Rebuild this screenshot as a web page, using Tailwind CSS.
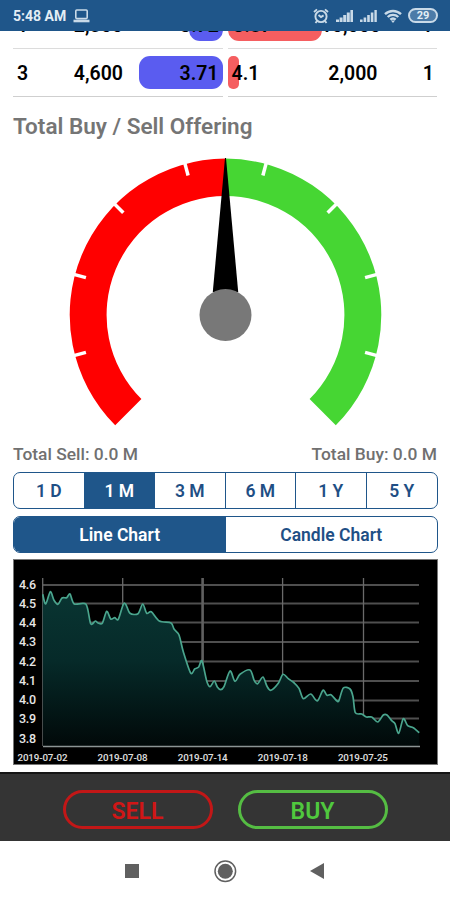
<!DOCTYPE html>
<html lang="en">
<head>
    <meta charset="UTF-8">
    <meta name="viewport" content="width=device-width, initial-scale=1.0">
    <title>Stock Detail</title>
    <script src="https://cdn.jsdelivr.net/npm/@tailwindcss/browser@4"></script>
</head>
<body class="bg-white">
    <div class="w-[450px] h-[900px] flex flex-col overflow-hidden bg-white font-['Roboto',sans-serif]">

        <!-- status bar -->
        <div class="h-[31px] shrink-0 bg-[#1f568a] text-[#e3edf5] flex items-center pl-[13px] pr-3">
            <span class="text-[14px] font-bold leading-none pt-[1px] w-[54px] whitespace-nowrap">5:48 AM</span>
            <svg class="ml-[6px] mt-[1px]" width="17" height="14" viewBox="0 0 17 14" fill="none" stroke="#c9dae8" stroke-width="1.6">
                <rect x="2.8" y="1" width="11.4" height="8.6" rx="1"/>
                <path d="M0.5 12h16" stroke-width="2.600"/>
            </svg>
            <svg class="ml-auto" width="16" height="16" viewBox="0 0 16 16" fill="none" stroke="#c9dae8" stroke-width="1.9">
                <circle cx="8" cy="8.5" r="5.6"/>
                <path d="M1 4l3-2.600M15 4l-3-2.600M5.500 7l2.500 2 2.600-1.600M4 13l-1.500 2M12 13l1.500 2"/>
            </svg>
            <svg class="ml-[6px]" width="19" height="14" viewBox="0 0 19 14" fill="#c9dae8">
                <path d="M1 10.500h3V13H1zM4.600 8.500h3V13h-3zM8.200 6h3v7h-3zM11.800 3.500h3V13h-3zM15.400 1H18v12h-2.600z"/>
            </svg>
            <svg class="ml-[5px]" width="19" height="14" viewBox="0 0 19 14" fill="#c9dae8">
                <path d="M1 10.500h2.600V13H1zM4.600 8.500h2.600V13H4.600zM8.200 6h2.600v7H8.200zM11.800 3.500h2.600V13h-2.600zM15.400 1h2.400v12h-2.400z"/>
            </svg>
            <svg class="ml-[6px]" width="18" height="14" viewBox="0 0 18 14" fill="none" stroke="#c9dae8" stroke-width="2.400">
                <path d="M1 5.200a11.500 11.500 0 0 1 16 0M3.700 8a7.600 7.600 0 0 1 10.600 0M6.300 10.700a4 4 0 0 1 5.400 0"/>
                <path d="M9 14l-2-2.500h4z" fill="#c9dae8" stroke="none"/>
            </svg>
            <div class="ml-[6px] w-[30px] h-[15px] rounded-full border-2 border-[#c9dae8] bg-[#4c7ba8] flex items-center justify-center text-[11px] font-bold leading-none">29</div>
        </div>

        <!-- order book -->
        <div class="h-[66px] shrink-0 mx-[13px] flex flex-col justify-end overflow-hidden text-[19.5px] font-semibold text-black">
            <div class="h-12 shrink-0 flex gap-[5px]">
                <div class="w-[210px] flex items-center border-b border-[#dcdcdc]">
                    <span class="w-[42px] pl-1 pt-[3px]">1</span>
                    <span class="w-[68px] text-right pt-[3px]">2,500</span>
                    <div class="ml-auto w-[34px] h-[33px] rounded-[11px] bg-[#5a5cf0] flex items-center justify-end pr-1 pt-[3px]">3.72</div>
                </div>
                <div class="w-[209px] flex items-center border-b border-[#dcdcdc]">
                    <div class="w-[94px] h-[33px] rounded-[11px] bg-[#f55e60] flex items-center pl-[5px] pt-[3px]">3.87</div>
                    <span class="w-[59px] flex justify-end whitespace-nowrap pt-[3px]">10,000</span>
                    <span class="ml-auto pr-[4px] pt-[3px]">1</span>
                </div>
            </div>
            <div class="h-12 shrink-0 flex gap-[5px]">
                <div class="w-[210px] flex items-center border-b border-[#cfcfcf]">
                    <span class="w-[42px] pl-1 pt-[2px]">3</span>
                    <span class="w-[68px] text-right pt-[2px]">4,600</span>
                    <div class="ml-auto w-[84px] h-[33px] rounded-[11px] bg-[#5a5cf0] flex items-center justify-end pr-1 pt-[2px]">3.71</div>
                </div>
                <div class="w-[210px] flex items-center border-b border-[#cfcfcf]">
                    <div class="w-[11px] h-[33px] rounded-[5px] bg-[#f55e60] flex items-center pl-1 pt-[2px] whitespace-nowrap">4.1</div>
                    <span class="w-[139px] text-right pt-[2px]">2,000</span>
                    <span class="ml-auto pr-[3px] pt-[2px]">1</span>
                </div>
            </div>
        </div>

        <h2 class="h-[58px] shrink-0 pl-[13px] text-[22.5px] leading-[58px] font-semibold text-[#757575] whitespace-nowrap">Total Buy / Sell Offering</h2>

        <!-- gauge -->
        <div class="h-[285px] shrink-0 flex justify-center">
            <svg class="shrink-0" width="450" height="285" viewBox="0 0 450 285">
                <path d="M225.500 3.500A156.500 156.500 0 0 0 115.200 270.300L141.400 244.100A119 119 0 0 1 225.500 41z" fill="#ff0000"/>
                <path d="M225.500 3.500A156.500 156.500 0 0 1 335.800 270.300L309.600 244.100A119 119 0 0 0 225.500 41z" fill="#46d633"/>
                <g id="ticks" stroke="#ffffff" stroke-width="3.500"></g>
                <path d="M225 3h1L238.200 137H212.800z" fill="#000000"/>
                <circle cx="225.500" cy="160" r="26" fill="#787878"/>
            </svg>
        </div>

        <div class="h-[32px] shrink-0 px-[13px] pb-[3px] flex justify-between items-center text-[17.4px] font-medium text-[#707070]">
            <span>Total Sell: 0.0 M</span>
            <span>Total Buy: 0.0 M</span>
        </div>

        <!-- range tabs -->
        <div class="h-[37px] shrink-0 ml-[13px] mr-3 rounded-[7px] border border-[#1f568a] overflow-hidden grid grid-cols-6 divide-x divide-[#1f568a] text-[17.5px] font-semibold text-[#1f4f85] text-center leading-[37px]">
            <span>1 D</span>
            <span class="bg-[#1f568a] text-white">1 M</span>
            <span>3 M</span>
            <span>6 M</span>
            <span>1 Y</span>
            <span>5 Y</span>
        </div>

        <!-- chart type -->
        <div class="h-[37px] shrink-0 ml-[13px] mr-3 mt-[7px] rounded-[7px] border border-[#1f568a] overflow-hidden grid grid-cols-2 text-[17.5px] font-semibold text-[#1f4f85] text-center leading-[37px]">
            <span class="bg-[#1f568a] text-white">Line Chart</span>
            <span>Candle Chart</span>
        </div>

        <!-- price chart -->
        <div class="h-[206px] shrink-0 ml-[13px] mr-3 mt-[6px] bg-black">
            <svg width="425" height="206" viewBox="0 0 425 206">
                <defs>
                    <linearGradient id="area" x1="0" y1="32" x2="0" y2="187" gradientUnits="userSpaceOnUse">
                        <stop offset="0" stop-color="#093532"/>
                        <stop offset="0.45" stop-color="#062a29"/>
                        <stop offset="1" stop-color="#010909"/>
                    </linearGradient>
                </defs>
                <rect x="0.500" y="0.500" width="424" height="205" fill="none" stroke="#777777"/>
                <path d="M30 26H406M30 44.600H406M30 63.500H406M30 83H406M30 102.500H406M30 122H406M30 141.500H406M30 159.500H406" stroke="#4f4f4f" stroke-width="2" fill="none"/>
                <path d="M29.700 19V187M109.700 19V187M269.600 19V187M350.500 19V187" stroke="#6a6a6a" stroke-width="1.300" fill="none"/>
                <path d="M189.600 19V187" stroke="#606060" stroke-width="2.600" fill="none"/>
                <path id="fill" fill="url(#area)"/>
                <path id="line" fill="none" stroke="#4aa58d" stroke-width="1.700" stroke-linejoin="round"/>
                <path d="M30 187.500H407" stroke="#8c9494" stroke-width="1.400"/>
                <g id="prices" fill="#e6e6e6" font-size="12.500" font-weight="500"></g>
                <g id="dates" fill="#e0e0e0" font-size="9.800" font-weight="500" text-anchor="middle"></g>
            </svg>
        </div>

        <!-- actions -->
        <div class="h-[69px] shrink-0 mt-[7px] bg-[#343434] border-t-2 border-[#161616] flex justify-center gap-[25px] pt-[16px] text-[23px] font-semibold">
            <button class="w-[150px] h-[39px] pt-[2px] rounded-full border-3 border-[#c21717] text-[#d01616]">SELL</button>
            <button class="w-[150px] h-[39px] pt-[2px] rounded-full border-3 border-[#55bd43] text-[#50c83e]">BUY</button>
        </div>

        <!-- system navigation -->
        <div class="flex-1 flex items-center pl-[125px]">
            <svg width="200" height="24" viewBox="0 0 200 24" fill="#606060">
                <rect x="0" y="5" width="14" height="14"/>
                <circle cx="100.300" cy="12.200" r="10.300" fill="none" stroke="#606060" stroke-width="1.500"/>
                <circle cx="100.300" cy="12.200" r="7.500"/>
                <path d="M185 12L199 4V20z"/>
            </svg>
        </div>
    </div>

    <script>
        const svgNS = 'http://www.w3.org/2000/svg';

        function addNode(parentId, tag, attrs, text) {
            const node = document.createElementNS(svgNS, tag);
            Object.keys(attrs).forEach(key => node.setAttribute(key, attrs[key]));
            if (text) {
                node.textContent = text;
            }
            document.getElementById(parentId).appendChild(node);
        }

        [-105, -75, -45, -15, 15, 45, 75, 105].forEach(angle => {
            addNode('ticks', 'path', { d: 'M225.5 2V15.5', transform: `rotate(${angle} 225.5 160)` });
        });

        ['4.6', '4.5', '4.4', '4.3', '4.2', '4.1', '4.0', '3.9', '3.8'].forEach((price, i) => {
            addNode('prices', 'text', { x: 6, y: 29.5 + i * 19.25, textLength: 17 }, price);
        });

        const dates = ['2019-07-02', '2019-07-08', '2019-07-14', '2019-07-18', '2019-07-25'];
        dates.forEach((date, i) => {
            addNode('dates', 'text', { x: 29.5 + i * 80.1, y: 202, textLength: 50 }, date);
        });

        const points = [
            [29.7, 35.3], [32.7, 45], [37.3, 32.7], [41, 41.3], [45, 45.3], [49, 39], [53.7, 38.7], [57, 35], [61.3, 45], [73, 45.3],
            [77.7, 64.7], [82.3, 62], [85, 64], [89.3, 64.3], [93.7, 52.3], [97.7, 60], [101.7, 58.7], [105.3, 60.3], [110.3, 45.3],
            [113, 45.7], [117, 54.3], [125, 54.7], [129.7, 45], [133.7, 54.3], [138.3, 52.7], [146.3, 62], [158, 64], [161, 70],
            [166, 76], [170.3, 92.7], [177.7, 114], [181.7, 110], [185.7, 108], [189, 102], [193.7, 122], [197, 127.7], [201.3, 122],
            [204.3, 128], [207.7, 130.7], [211, 127.7], [217, 112], [222, 122.3], [227, 115.3], [237, 111], [241.3, 121.7],
            [244.7, 124.7], [250, 118], [254, 127.3], [258, 131.3], [265.3, 124.3], [270, 115.3], [275.3, 119.7], [281.3, 124],
            [286, 129.3], [290.3, 139.7], [297.7, 135], [304.3, 142], [310, 131.3], [314, 136.3], [318, 135.7], [324, 142],
            [326, 141.3], [330.3, 129], [337, 130], [340, 137.7], [342.3, 153.7], [348.7, 155], [353.3, 158], [358.7, 158],
            [364.7, 163], [370.3, 156], [374, 156], [378.7, 161.7], [382, 164.7], [385.7, 174.3], [390.3, 159.7], [394.7, 166.7],
            [400.3, 168.7], [406.3, 173.7]
        ];

        // smooth curve through every point
        let d = `M${points[0]}`;
        for (let i = 0; i < points.length - 1; i++) {
            const p0 = points[i - 1] || points[i];
            const p1 = points[i];
            const p2 = points[i + 1];
            const p3 = points[i + 2] || p2;
            d += `C${p1[0] + (p2[0] - p0[0]) / 7} ${p1[1] + (p2[1] - p0[1]) / 7} ${p2[0] - (p3[0] - p1[0]) / 7} ${p2[1] - (p3[1] - p1[1]) / 7} ${p2[0]} ${p2[1]}`;
        }
        document.getElementById('line').setAttribute('d', d);
        document.getElementById('fill').setAttribute('d', d + 'V187H29.7Z');
    </script>
</body>
</html>
